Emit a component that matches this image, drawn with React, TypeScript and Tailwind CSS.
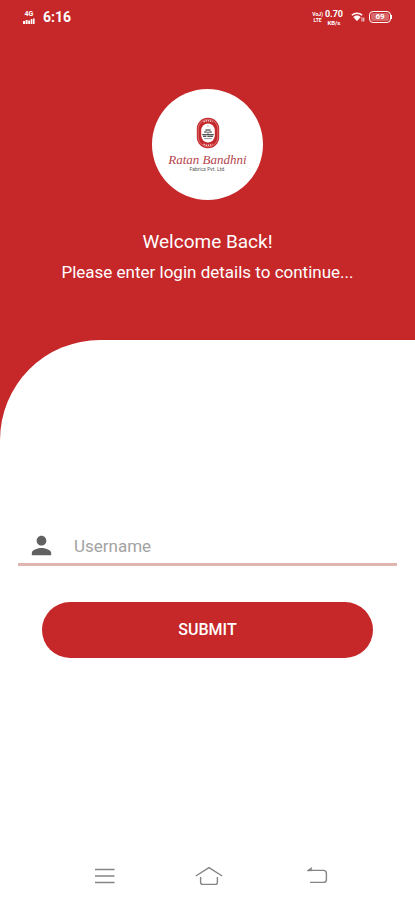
import React, { useState } from 'react';

const StatusBar: React.FC = () => (
  <div className="flex h-8 items-center justify-between px-[23px] pt-0.5 text-white">
    <div className="flex items-center gap-2">
      <div className="flex w-3 flex-col items-center">
        <span className="text-[7px] font-bold leading-[7px]">4G</span>
        <svg viewBox="0 0 12 6" className="h-[6px] w-3" fill="currentColor" aria-hidden="true">
          <rect x="0" y="3" width="2" height="3" />
          <rect x="2.6" y="2" width="2" height="4" />
          <rect x="5.2" y="2.5" width="2" height="3.5" />
          <rect x="7.8" y="1" width="1.6" height="5" />
          <rect x="10" y="0.5" width="1.6" height="5.5" />
        </svg>
      </div>
      <span className="text-sm font-bold leading-4">6:16</span>
    </div>

    <div className="flex items-center">
      <div className="flex flex-col items-center text-[5px] font-bold leading-[6px]">
        <span>VoJ)</span>
        <span>LTE</span>
      </div>
      <div className="ml-0.5 flex flex-col items-center font-bold">
        <span className="text-[9px] leading-[10px]">0.70</span>
        <span className="text-[6px] leading-[7px]">KB/s</span>
      </div>
      <svg viewBox="0 0 14 12" className="ml-2 h-3 w-[14px]" fill="none" stroke="currentColor" aria-hidden="true">
        <path d="M0.8 4.2C3.6 1.6 8.4 1.6 11.2 4.2" strokeWidth="1.4" />
        <path d="M2.6 6C4.6 4.2 7.4 4.2 9.4 6L6 9.8Z" fill="currentColor" strokeWidth="0.6" />
        <path d="M11 6.5v4M12.8 6.5v4" strokeWidth="0.9" />
      </svg>
      <div className="ml-1 flex items-center">
        <div className="flex h-3 w-[22px] items-center justify-center rounded border border-white p-px">
          <span className="w-full rounded-xs bg-white/30 text-center text-[8px] font-bold leading-[8px]">69</span>
        </div>
        <div className="h-1 w-px bg-white" />
      </div>
    </div>
  </div>
);

const Logo: React.FC = () => (
  <div className="flex h-[111px] w-[111px] flex-col items-center rounded-full bg-white pt-7">
    <svg viewBox="0 0 24 32" className="h-8 w-6" aria-hidden="true">
      <rect x="0.8" y="0.8" width="22.4" height="30.4" rx="11.2" fill="#c4282b" />
      <rect x="2.2" y="2.2" width="19.6" height="27.6" rx="9.8" fill="none" stroke="#e79a9a" strokeWidth="0.6" />
      <path d="M7.5 4.8Q12 2.6 16.5 4.8M7.5 27.2Q12 29.4 16.5 27.2" fill="none" stroke="#f3c4c4" strokeWidth="1.5" strokeDasharray="1.4 0.8" />
      <rect x="5.2" y="6.6" width="13.6" height="18.8" rx="6.8" fill="#fff" />
      <path d="M12 8.2v1.6" stroke="#999" strokeWidth="0.8" />
      <path d="M9.4 13h5.2M8.2 15h2.6M13.2 15h2.6M11.2 15.6h1.6" stroke="#666" strokeWidth="1.6" />
      <path d="M6.2 17.6h11.6M7 19.4h3.4M11.4 19.4h5.6" stroke="#555" strokeWidth="1.3" />
      <path d="M8.2 21.6h7.6" stroke="#999" strokeWidth="1" />
    </svg>
    <span className="mt-1 whitespace-nowrap font-['Liberation_Serif',serif] text-[13px] italic leading-[14px] text-[#b5444c]">
      Ratan Bandhni
    </span>
    <span className="text-[5px] leading-[5px] text-[#555555]">Fabrics Pvt. Ltd.</span>
  </div>
);

const NavigationBar: React.FC = () => (
  <nav className="mt-auto flex h-12 items-center justify-between pl-[92px] pr-[86px] text-[#858585]">
    <button type="button" aria-label="Recent apps" className="flex h-6 w-6 items-center justify-center">
      <svg viewBox="0 0 24 24" className="h-6 w-6" fill="none" stroke="currentColor" strokeWidth="1.4">
        <path d="M3 5.5h19.5M3 12h19.5M3 18.5h19.5" />
      </svg>
    </button>
    <button type="button" aria-label="Home" className="flex h-6 w-8 items-center justify-start">
      <svg viewBox="0 0 28 24" className="h-6 w-7" fill="none" stroke="currentColor" strokeWidth="1.4">
        <path d="M0.8 12L14 3.6L27.2 12" />
        <path d="M5.6 13v5.2Q5.6 20.4 7.8 20.4H20.2Q22.4 20.4 22.4 18.2V13" />
      </svg>
    </button>
    <button type="button" aria-label="Back" className="flex h-6 w-6 items-center justify-center">
      <svg viewBox="0 0 24 24" className="h-6 w-6" fill="none" stroke="currentColor" strokeWidth="1.4">
        <path d="M3 6.4H18.4Q21.4 6.4 21.4 9.4V15.4Q21.4 18.4 18.4 18.4H5" />
        <path d="M2 6.8L6.6 3.6V6.8Z" fill="currentColor" strokeWidth="0.6" />
      </svg>
    </button>
  </nav>
);

export default function App() {
  const [username, setUsername] = useState('');

  return (
    <div className="flex min-h-screen flex-col bg-[#c62729] font-[Roboto,sans-serif]">
      <StatusBar />

      {/* Header */}
      <header className="flex flex-col items-center px-4 pb-14 pt-[57px] text-center text-white">
        <Logo />
        <h1 className="mt-7 text-[19px] leading-7">Welcome Back!</h1>
        <p className="mt-1 text-[17px] leading-6">Please enter login details to continue...</p>
      </header>

      {/* Login form */}
      <main className="flex flex-1 flex-col rounded-tl-[100px] bg-white">
        <form className="px-[18px] pt-[188px]" onSubmit={(e) => e.preventDefault()}>
          <div className="flex h-[38px] items-center border-b-[3px] border-[#e0b5b0] pl-[9px]">
            <label htmlFor="username" aria-label="Username">
              <svg viewBox="0 0 24 24" className="h-[29px] w-[29px]" fill="#616161" aria-hidden="true">
                <path d="M12 12c2.21 0 4-1.79 4-4s-1.79-4-4-4-4 1.79-4 4 1.79 4 4 4zm0 2c-2.67 0-8 1.34-8 4v2h16v-2c0-2.66-5.33-4-8-4z" />
              </svg>
            </label>
            <input
              id="username"
              type="text"
              placeholder="Username"
              value={username}
              onChange={(e) => setUsername(e.target.value)}
              className="ml-[18px] min-w-0 flex-1 bg-transparent text-[17px] leading-6 text-[#424242] outline-none placeholder:text-[#a3a3a3]"
            />
          </div>
          <div className="px-6 pt-9">
            <button type="submit" className="h-14 w-full rounded-full bg-[#c62729] text-base font-medium text-white">
              SUBMIT
            </button>
          </div>
        </form>
        <NavigationBar />
      </main>
    </div>
  );
}
